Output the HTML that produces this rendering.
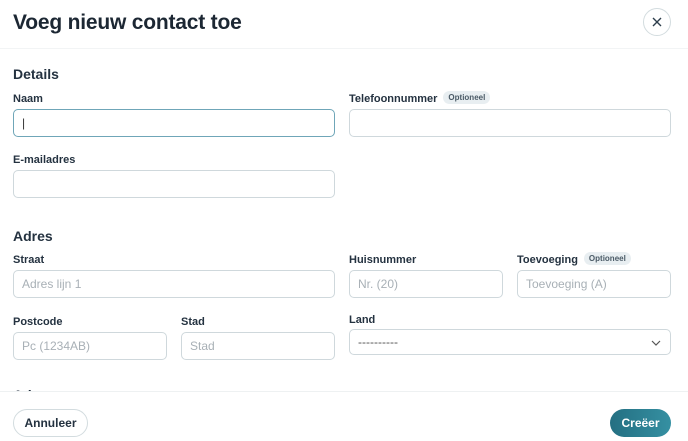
<!DOCTYPE html>
<html><head><meta charset="utf-8"><style>
*{box-sizing:border-box;margin:0;padding:0}
body{width:688px;height:441px;background:#fff;font-family:"Liberation Sans",sans-serif;color:#1f2a37;position:relative;overflow:hidden}
.a{position:absolute}
h1{position:absolute;left:13px;top:11px;font-size:21px;font-weight:600;letter-spacing:-0.2px;color:#1c2733}
.h{font-size:14px;font-weight:600;color:#243240}
.l{font-size:11px;font-weight:bold;color:#243240;display:flex;align-items:center;height:14px}
.i{position:absolute;height:28px;border:1px solid #cfd8dc;border-radius:5px;font-size:12px;color:#a8b0b6;padding:0 8px;line-height:26px}
.o{display:inline-block;background:#e8eef1;color:#4a5a66;font-size:8px;font-weight:bold;border-radius:7px;padding:2px 5px;margin-left:6px;margin-top:-4px}
</style></head><body>
<h1>Voeg nieuw contact toe</h1>
<div class="a" style="left:643px;top:8px;width:28px;height:28px;border:1px solid #d3dcdf;border-radius:50%">
<svg width="26" height="26" viewBox="0 0 26 26" style="position:absolute;left:0;top:0"><path d="M9 9L17 17M17 9L9 17" stroke="#2e3e4c" stroke-width="1.4"/></svg></div>
<div class="a" style="left:0;top:48px;width:688px;height:1px;background:#f2f4f5"></div>
<div class="a h" style="left:13px;top:66px">Details</div>
<div class="a l" style="left:13px;top:92px">Naam</div>
<div class="i" style="left:13px;top:109px;width:322px;border-color:#6fa6b8"><span style="color:#333">|</span></div>
<div class="a l" style="left:349px;top:92px">Telefoonnummer<span class="o">Optioneel</span></div>
<div class="i" style="left:349px;top:109px;width:322px"></div>
<div class="a l" style="left:13px;top:153px">E-mailadres</div>
<div class="i" style="left:13px;top:170px;width:322px"></div>
<div class="a h" style="left:13px;top:228px">Adres</div>
<div class="a l" style="left:13px;top:253px">Straat</div>
<div class="i" style="left:13px;top:270px;width:322px">Adres lijn 1</div>
<div class="a l" style="left:349px;top:253px">Huisnummer</div>
<div class="i" style="left:349px;top:270px;width:154px">Nr. (20)</div>
<div class="a l" style="left:517px;top:253px">Toevoeging<span class="o">Optioneel</span></div>
<div class="i" style="left:517px;top:270px;width:154px">Toevoeging (A)</div>
<div class="a l" style="left:13px;top:315px">Postcode</div>
<div class="i" style="left:13px;top:332px;width:154px">Pc (1234AB)</div>
<div class="a l" style="left:181px;top:315px">Stad</div>
<div class="i" style="left:181px;top:332px;width:154px">Stad</div>
<div class="a l" style="left:349px;top:313px">Land</div>
<div class="i" style="left:349px;top:329px;width:322px;height:26px;line-height:24px;color:#555">----------
<svg width="10" height="6" viewBox="0 0 10 6" style="position:absolute;right:9px;top:10px"><path d="M1 1L5 5L9 1" stroke="#555" fill="none" stroke-width="1.2"/></svg></div>
<div class="a h" style="left:13px;top:387px;height:4px;overflow:hidden">Ad</div>
<div class="a" style="left:0;top:391px;width:688px;height:50px;background:#fff;border-top:1px solid #eef1f2"></div>
<div class="a" style="left:13px;top:409px;width:75px;height:28px;border:1px solid #d3dcdf;border-radius:14px;font-size:12px;font-weight:bold;text-align:center;line-height:26px;color:#243240">Annuleer</div>
<div class="a" style="left:610px;top:409px;width:61px;height:28px;border-radius:14px;background:linear-gradient(90deg,#246f82,#3590a2);color:#fff;font-size:12px;font-weight:bold;text-align:center;line-height:28px">Creëer</div>
</body></html>
